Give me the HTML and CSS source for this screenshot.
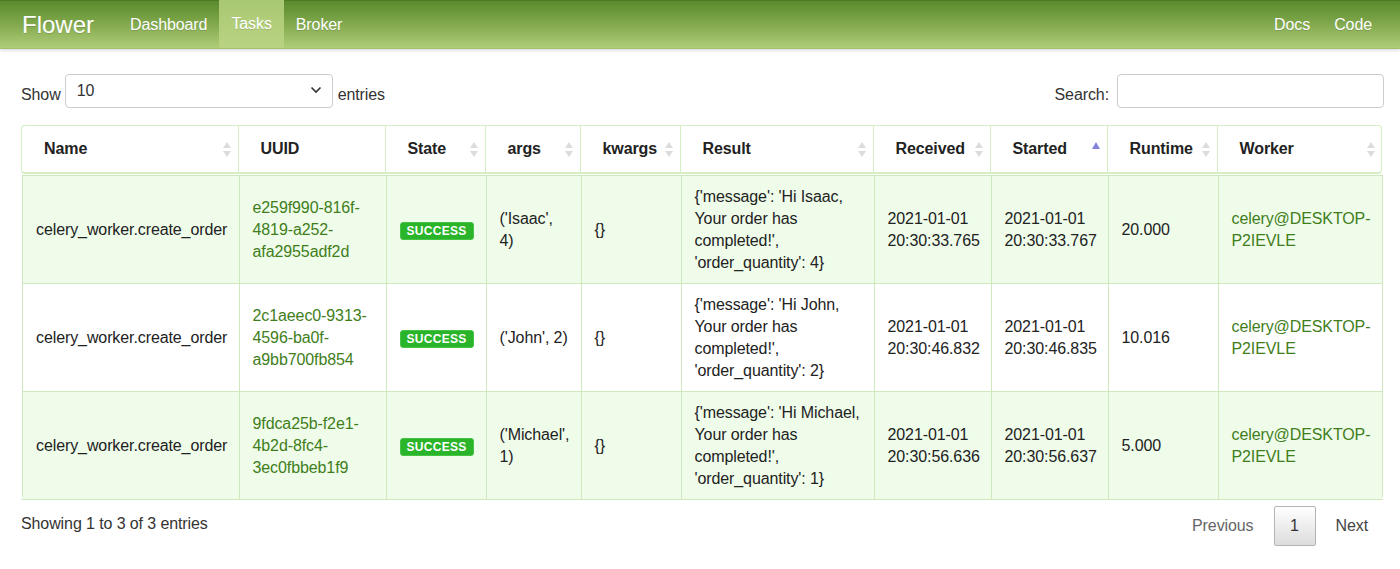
FILE: index.html
```html
<!DOCTYPE html>
<html>
<head>
<meta charset="utf-8">
<title>Flower</title>
<link rel="stylesheet" href="styles.css">
</head>
<body>
<nav class="navbar">
  <div class="nav-left">
    <a class="brand">Flower</a>
    <a class="nav-item">Dashboard</a>
    <a class="nav-item active">Tasks</a>
    <a class="nav-item">Broker</a>
  </div>
  <div class="nav-right">
    <a class="nav-item">Docs</a>
    <a class="nav-item">Code</a>
  </div>
</nav>

<main class="content">
  <div class="controls">
    <label class="length"><span class="lbl">Show</span>
      <span class="select"><span class="select-value">10</span>
        <svg class="chev" width="12" height="8" viewBox="0 0 12 8"><path d="M1.5 1.5 L6 6 L10.5 1.5" fill="none" stroke="#333" stroke-width="1.6"/></svg>
      </span>
      <span class="lbl">entries</span></label>
    <label class="search"><span class="lbl">Search:</span> <span class="input"></span></label>
  </div>

  <div class="thead-wrap">
    <table class="grid head">
      <colgroup>
        <col class="c1"><col class="c2"><col class="c3"><col class="c4"><col class="c5"><col class="c6"><col class="c7"><col class="c8"><col class="c9"><col class="c10">
      </colgroup>
      <tr>
        <th class="sortable">Name</th>
        <th>UUID</th>
        <th class="sortable">State</th>
        <th class="sortable">args</th>
        <th class="sortable">kwargs</th>
        <th class="sortable">Result</th>
        <th class="sortable">Received</th>
        <th class="asc">Started</th>
        <th class="sortable">Runtime</th>
        <th class="sortable">Worker</th>
      </tr>
    </table>
  </div>

  <div class="tbody-wrap">
    <table class="grid body">
      <colgroup>
        <col class="c1"><col class="c2"><col class="c3"><col class="c4"><col class="c5"><col class="c6"><col class="c7"><col class="c8"><col class="c9"><col class="c10">
      </colgroup>
      <tr class="odd">
        <td>celery_worker.create_order</td>
        <td><a class="link">e259f990-816f-4819-a252-afa2955adf2d</a></td>
        <td><span class="label">SUCCESS</span></td>
        <td>('Isaac', 4)</td>
        <td>{}</td>
        <td>{'message': 'Hi Isaac, Your order has completed!', 'order_quantity': 4}</td>
        <td>2021-01-01 20:30:33.765</td>
        <td>2021-01-01 20:30:33.767</td>
        <td>20.000</td>
        <td><a class="link">celery@DESKTOP-P2IEVLE</a></td>
      </tr>
      <tr class="even">
        <td>celery_worker.create_order</td>
        <td><a class="link">2c1aeec0-9313-4596-ba0f-a9bb700fb854</a></td>
        <td><span class="label">SUCCESS</span></td>
        <td>('John', 2)</td>
        <td>{}</td>
        <td>{'message': 'Hi John, Your order has completed!', 'order_quantity': 2}</td>
        <td>2021-01-01 20:30:46.832</td>
        <td>2021-01-01 20:30:46.835</td>
        <td>10.016</td>
        <td><a class="link">celery@DESKTOP-P2IEVLE</a></td>
      </tr>
      <tr class="odd">
        <td>celery_worker.create_order</td>
        <td><a class="link">9fdca25b-f2e1-4b2d-8fc4-3ec0fbbeb1f9</a></td>
        <td><span class="label">SUCCESS</span></td>
        <td>('Michael', 1)</td>
        <td>{}</td>
        <td>{'message': 'Hi Michael, Your order has completed!', 'order_quantity': 1}</td>
        <td>2021-01-01 20:30:56.636</td>
        <td>2021-01-01 20:30:56.637</td>
        <td>5.000</td>
        <td><a class="link">celery@DESKTOP-P2IEVLE</a></td>
      </tr>
    </table>
  </div>
  <div class="scroll-foot"></div>

  <div class="footer">
    <div class="info">Showing 1 to 3 of 3 entries</div>
    <div class="paging">
      <span class="pg prev">Previous</span>
      <span class="pg current">1</span>
      <span class="pg next">Next</span>
    </div>
  </div>
</main>
</body>
</html>
```

FILE: styles.css
```css
* { box-sizing: border-box; }
html, body { margin: 0; padding: 0; }
body {
  font-family: "Liberation Sans", Arial, sans-serif;
  font-size: 16px;
  letter-spacing: -0.1px;
  color: #333;
  background: #fff;
}

/* navbar */
.navbar {
  height: 49px;
  display: flex;
  justify-content: space-between;
  align-items: stretch;
  background: linear-gradient(to bottom, #5a8a2d 0%, #7ea64a 45%, #afcd78 100%);
  border-top: 1px solid #4d7a24;
  border-bottom: 1px solid #a2c070;
  box-shadow: 0 2px 3px rgba(0,0,0,0.12);
  padding: 0 16px 0 22px;
}
.nav-left, .nav-right { display: flex; align-items: stretch; }
.brand {
  color: #fff;
  font-size: 24px;
  letter-spacing: 0;
  line-height: 47px;
  padding-right: 24px;
  text-shadow: 0 1px 0 rgba(0,0,0,0.15);
}
.nav-item {
  color: #fff;
  font-size: 16px;
  line-height: 47px;
  padding: 0 12px;
  text-shadow: 0 1px 0 rgba(0,0,0,0.15);
}
.nav-item.active {
  background: linear-gradient(to bottom, #a9c873 0%, #b9d382 100%);
  margin-top: -1px;
  line-height: 48px;
}

/* content */
.content { padding: 0 16px 0 21px; }
.controls {
  display: flex;
  justify-content: space-between;
  align-items: center;
  margin-top: 25px;
  height: 34px;
}
.length, .search { display: flex; align-items: center; gap: 4px; color: #333; }
.lbl { position: relative; top: 4px; }
.select {
  width: 268px;
  height: 34px;
  border: 1px solid #ccc;
  border-radius: 4px;
  display: flex;
  align-items: center;
  justify-content: space-between;
  padding: 0 10px 0 11px;
  margin: 0 1px 0 0;
}
.chev { position: relative; top: -1px; }
.search { gap: 8px; }
.input {
  display: block;
  width: 267px;
  height: 34px;
  border: 1px solid #ccc;
  border-radius: 4px;
}

/* tables */
.grid {
  border-collapse: collapse;
  table-layout: fixed;
  width: 1360px;
}
.c1 { width: 216px; }
.c2 { width: 147px; }
.c3 { width: 100px; }
.c4 { width: 95px; }
.c5 { width: 100px; }
.c6 { width: 193px; }
.c7 { width: 117px; }
.c8 { width: 117px; }
.c9 { width: 110px; }
.c10 { width: 165px; }

.thead-wrap {
  margin-top: 17px;
  width: 1361px;
  border: 1px solid #d3efc3;
  border-bottom: 2px solid #d3efc3;
  border-radius: 4px;
  overflow: hidden;
}
.head th {
  height: 46px;
  text-align: left;
  font-weight: bold;
  padding: 0 22px;
  border-left: 1px solid #d3efc3;
  position: relative;
  color: #222;
}
.head th:first-child { border-left: none; }
.head th.sortable::before,
.head th.sortable::after {
  content: "";
  position: absolute;
  right: 7px;
  width: 0; height: 0;
  border-left: 4.5px solid transparent;
  border-right: 4.5px solid transparent;
}
.head th.sortable::before {
  top: 16px;
  border-bottom: 6px solid #dcdcdc;
}
.head th.sortable::after {
  top: 25px;
  border-top: 6px solid #dcdcdc;
}
.head th.asc::before {
  content: "";
  position: absolute;
  right: 7px;
  top: 16px;
  width: 0; height: 0;
  border-left: 4.5px solid transparent;
  border-right: 4.5px solid transparent;
  border-bottom: 7px solid #8585de;
}

.tbody-wrap {
  width: 1361px;
  margin-left: 1px;
  border-left: 1px solid #cde9bd;
  border-right: 1px solid #cde9bd;
  border-radius: 0 0 4px 4px;
  overflow: hidden;
  margin-top: 1px;
}
.body td {
  height: 107px;
  padding: 10px 11px 9px 13px;
  line-height: 22px;
  vertical-align: middle;
  border-left: 1px solid #cde9bd;
  border-top: 1px solid #cde9bd;
  color: #222;
}
.body td:first-child { border-left: none; padding-right: 4px; }
.body tr.odd td { background: #effcea; }
.body tr.even td { background: #fff; }
.link { color: #3f7e1b; }
.label {
  display: inline-block;
  background: #2ab42a;
  border: 1px solid #45c345;
  color: #fff;
  font-weight: bold;
  font-size: 12px;
  line-height: 14px;
  padding: 1px 6px;
  border-radius: 3px;
  letter-spacing: 0.3px;
}
.scroll-foot {
  border-top: 1px solid #cde9bd;
  width: 1362px;
}

.footer {
  display: flex;
  justify-content: space-between;
  align-items: center;
  margin-top: 6px;
  height: 40px;
}
.info { color: #333; position: relative; top: -2px; }
.paging { display: flex; align-items: center; }
.pg { padding: 0 20px; color: #555; line-height: 40px; }
.pg.prev { color: #666; }
.pg.next { color: #444; padding-right: 16px; }
.pg.current {
  width: 42px;
  height: 40px;
  padding: 0;
  text-align: center;
  line-height: 38px;
  color: #333;
  border: 1px solid #b4b4b4;
  border-radius: 2px;
  background: linear-gradient(to bottom, #fff 0%, #dcdcdc 100%);
}
```
